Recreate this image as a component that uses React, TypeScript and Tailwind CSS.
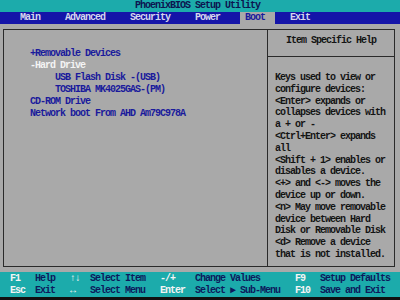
import React from 'react';

const menuItems = [
  { label: 'Main', width: 'w-[45px]' },
  { label: 'Advanced', width: 'w-[65px]' },
  { label: 'Security', width: 'w-[65px]' },
  { label: 'Power', width: 'w-[45px]' },
];

const bootItems = [
  { label: '+Removable Devices', indent: false, active: false },
  { label: '-Hard Drive', indent: false, active: true },
  { label: 'USB Flash Disk -(USB)', indent: true, active: false },
  { label: 'TOSHIBA MK4025GAS-(PM)', indent: true, active: false },
  { label: 'CD-ROM Drive', indent: false, active: false },
  { label: 'Network boot From AHD Am79C978A', indent: false, active: false },
];

const helpLines = [
  'Keys used to view or',
  'configure devices:',
  '<Enter> expands or',
  'collapses devices with',
  'a + or -',
  '<Ctrl+Enter> expands',
  'all',
  '<Shift + 1> enables or',
  'disables a device.',
  '<+> and <-> moves the',
  'device up or down.',
  '<n> May move removable',
  'device between Hard',
  'Disk or Removable Disk',
  '<d> Remove a device',
  'that is not installed.',
];

const footerRows = [
  [
    ['F1', 'Help'],
    ['↑↓', 'Select Item'],
    ['-/+', 'Change Values'],
    ['F9', 'Setup Defaults'],
  ],
  [
    ['Esc', 'Exit'],
    ['↔', 'Select Menu'],
    ['Enter', 'Select ► Sub-Menu'],
    ['F10', 'Save and Exit'],
  ],
];

export default function App() {
  return (
    <div className="w-[400px] h-[300px] overflow-hidden flex flex-col bg-[#a9a9a9] text-[10px] tracking-[-1px] font-bold font-['Liberation_Mono',monospace] whitespace-pre">
      {/* title bar */}
      <div className="h-[12px] leading-[12px] bg-[#1cabab] pl-[135px] text-[#0c1450]">
        PhoenixBIOS Setup Utility
      </div>

      {/* menu bar */}
      <div className="h-[12px] leading-[12px] bg-[#1414a8] flex pl-[20px] text-[#d6d6ee]">
        {menuItems.map(item => (
          <span key={item.label} className={item.width}>
            {item.label}
          </span>
        ))}
        <span className="w-[35px] pl-[5px] bg-[#a9a9a9] text-[#1a1a9c]">Boot</span>
        <span className="ml-[15px]">Exit</span>
      </div>

      {/* body */}
      <div className="flex-1 pt-[5px] pb-[5px] pl-[3px] pr-[5px]">
        <div className="h-full flex border border-[#2a2a2a]">
          <div className="w-[264px] border-r border-[#2a2a2a] pt-[18px] pl-[26px] leading-[12px]">
            {bootItems.map(item => (
              <div
                key={item.label}
                className={`${item.indent ? 'pl-[25px]' : ''} ${item.active ? 'text-[#f4f4f4]' : 'text-[#1a1a9c]'}`}
              >
                {item.label}
              </div>
            ))}
          </div>
          <div className="flex-1 flex flex-col pt-[5px] text-[#141414]">
            <div className="leading-[12px] text-center">Item Specific Help</div>
            <div className="mt-[9px] border-t border-[#2a2a2a]" />
            <div className="mt-[15px] pl-[7px] leading-[11.8px]">
              {helpLines.map((line, i) => (
                <div key={i}>{line}</div>
              ))}
            </div>
          </div>
        </div>
      </div>

      {/* key legend */}
      <div className="h-[25px] bg-[#1cabab] pt-[1px] pl-[10px] leading-[12px]">
        {footerRows.map((row, r) => (
          <div key={r} className="flex">
            <span className="w-[25px] text-[#f4f4f4]">{row[0][0]}</span>
            <span className="w-[35px] text-[#0c1a5c]">{row[0][1]}</span>
            <span className="w-[20px] text-[#f4f4f4]">{row[1][0]}</span>
            <span className="w-[70px] text-[#0c1a5c]">{row[1][1]}</span>
            <span className="w-[35px] text-[#f4f4f4]">{row[2][0]}</span>
            <span className="w-[100px] text-[#0c1a5c]">{row[2][1]}</span>
            <span className="w-[25px] text-[#f4f4f4]">{row[3][0]}</span>
            <span className="text-[#0c1a5c]">{row[3][1]}</span>
          </div>
        ))}
      </div>
      <div className="h-[3px] bg-[#101010]" />
    </div>
  );
}
